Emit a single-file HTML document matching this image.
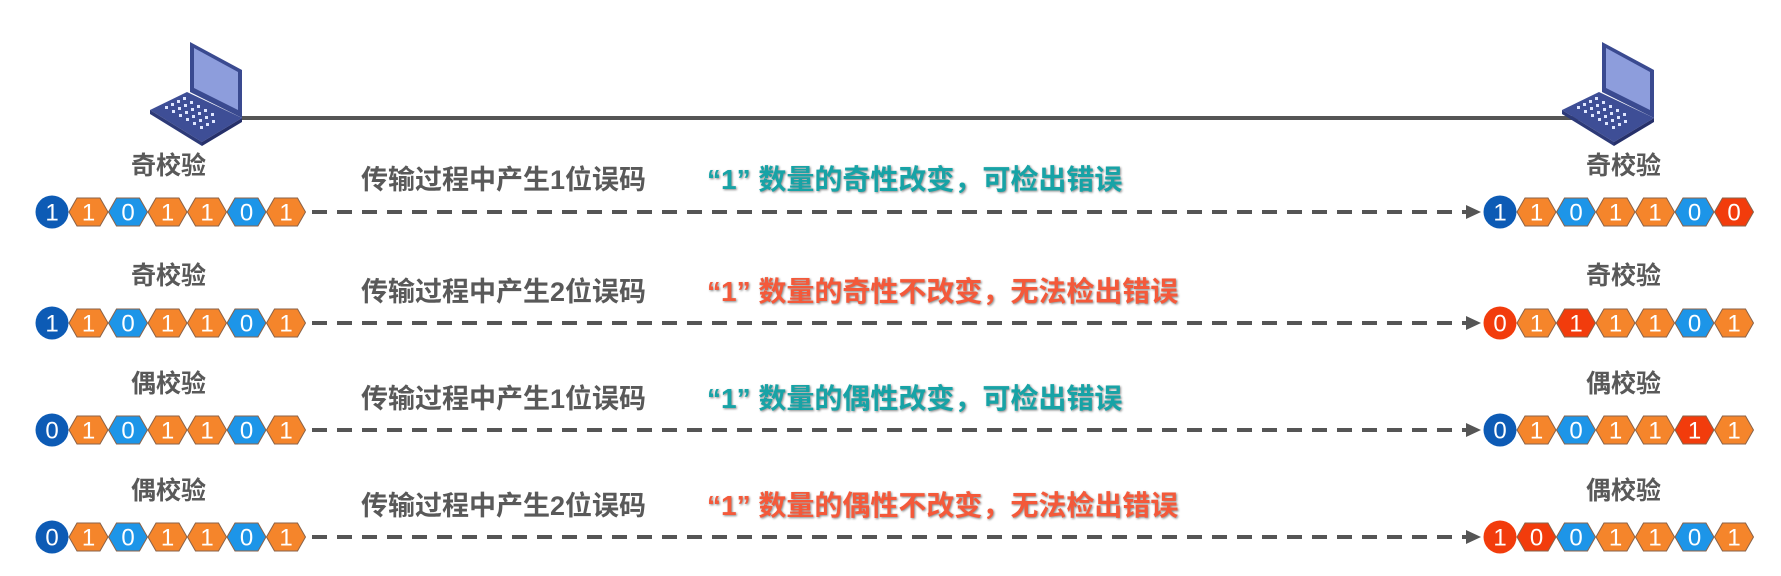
<!DOCTYPE html>
<html><head><meta charset="utf-8">
<style>
body{margin:0;width:1781px;height:576px;background:#fff;overflow:hidden;position:relative;font-family:"Liberation Sans","Noto Sans CJK SC",sans-serif;}
.t{position:absolute;font-weight:bold;white-space:nowrap;line-height:1;}
.lab{font-size:25px;color:#595959;}
.mid{font-size:27px;color:#595959;}
.g{font-size:28px;color:#17a3a6;text-shadow:1px 1px 2px #888;}
.r{font-size:28px;color:#f4593a;text-shadow:1px 1px 2px #888;}
svg{position:absolute;left:0;top:0}
</style></head><body>
<svg id="s" width="1781" height="576" xmlns="http://www.w3.org/2000/svg">
<defs>
<g id="lap">
<polygon points="150,110 187,92 242,118 202,142" fill="#3e4e96"/>
<polygon points="150,110 202,142 202,146 150,114" fill="#2d3a78"/>
<polygon points="202,142 242,118 242,122 202,146" fill="#26306a"/>
<polygon points="190,42 242,70 242,118 190,92" fill="#3a4a90"/>
<polygon points="194,48 238,72 238,110 194,88" fill="#8d9ddc"/>
<g fill="#dfe6ff">
<rect x="165" y="106" width="3" height="3"/><rect x="171" y="103" width="3" height="3"/><rect x="177" y="100" width="3" height="3"/><rect x="183" y="97" width="3" height="3"/>
<rect x="172" y="110" width="3" height="3"/><rect x="178" y="107" width="3" height="3"/><rect x="184" y="104" width="3" height="3"/><rect x="190" y="101" width="3" height="3"/>
<rect x="179" y="114" width="3" height="3"/><rect x="185" y="111" width="3" height="3"/><rect x="191" y="108" width="3" height="3"/><rect x="197" y="105" width="3" height="3"/>
<rect x="186" y="118" width="3" height="3"/><rect x="192" y="115" width="3" height="3"/><rect x="198" y="112" width="3" height="3"/><rect x="204" y="109" width="3" height="3"/>
<rect x="193" y="122" width="3" height="3"/><rect x="199" y="119" width="3" height="3"/><rect x="205" y="116" width="3" height="3"/><rect x="211" y="113" width="3" height="3"/>
<rect x="200" y="126" width="3" height="3"/><rect x="206" y="123" width="3" height="3"/><rect x="212" y="120" width="3" height="3"/>
</g>
</g>
</defs>
<line x1="242" y1="118" x2="1580" y2="118" stroke="#555" stroke-width="4"/>
<use href="#lap"/>
<use href="#lap" transform="translate(1412,0)"/>
</svg>
<div class="t lab" style="left:131px;top:154px">奇校验</div>
<div class="t lab" style="left:1586px;top:154px">奇校验</div>
<div class="t lab" style="left:131px;top:264px">奇校验</div>
<div class="t lab" style="left:1586px;top:264px">奇校验</div>
<div class="t lab" style="left:131px;top:372px">偶校验</div>
<div class="t lab" style="left:1586px;top:372px">偶校验</div>
<div class="t lab" style="left:131px;top:479px">偶校验</div>
<div class="t lab" style="left:1586px;top:479px">偶校验</div>

<div class="t mid" style="left:361px;top:167px">传输过程中产生1位误码</div>
<div class="t g" style="left:707px;top:166px">“1” 数量的奇性改变，可检出错误</div>
<div class="t mid" style="left:361px;top:279px">传输过程中产生2位误码</div>
<div class="t r" style="left:707px;top:278px">“1” 数量的奇性不改变，无法检出错误</div>
<div class="t mid" style="left:361px;top:386px">传输过程中产生1位误码</div>
<div class="t g" style="left:707px;top:385px">“1” 数量的偶性改变，可检出错误</div>
<div class="t mid" style="left:361px;top:493px">传输过程中产生2位误码</div>
<div class="t r" style="left:707px;top:492px">“1” 数量的偶性不改变，无法检出错误</div>

<script>
var s=document.getElementById('s'),NS='http://www.w3.org/2000/svg';
function el(t,a,txt){var e=document.createElementNS(NS,t);for(var k in a)e.setAttribute(k,a[k]);if(txt!=null)e.textContent=txt;s.appendChild(e);return e;}
var C={D:'#0d5bb5',O:'#f5852b',B:'#1d95e8',R:'#f23c0c'};
function chip(x,y,v,col,circle){
 if(circle){el('circle',{cx:x,cy:y,r:16.5,fill:col==='R'?C.R:C.D});}
 else{el('polygon',{points:[x,y,x+8,y-14,x+31,y-14,x+39,y,x+31,y+14,x+8,y+14].join(','),fill:C[col],stroke:'#8a6248','stroke-width':1});}
 el('text',{x:circle?x:x+19.5,y:y+8.5,'text-anchor':'middle','font-size':24,fill:'#fff','font-family':'Liberation Sans, sans-serif'},v);
}
function seq(x0,y,c,cc,bits,red){
 chip(x0,y,c,cc,true);
 for(var i=0;i<6;i++){var b=bits[i];chip(x0+17+i*39.5,y,b,red.indexOf(i)>=0?'R':(b==='1'?'O':'B'),false);}
}
var rows=[
 [212,'1','D','101101','1','D','101100',[5]],
 [323,'1','D','101101','0','R','111101',[1]],
 [430,'0','D','101101','0','D','101111',[4]],
 [537,'0','D','101101','1','R','001101',[0]]];
rows.forEach(function(r){
 var y=r[0];
 seq(52,y,r[1],r[2],r[3],[]);
 seq(1500,y,r[4],r[5],r[6],r[7]);
 el('line',{x1:312,y1:y,x2:1472,y2:y,stroke:'#555','stroke-width':4,'stroke-dasharray':'15,10'});
 el('polygon',{points:[1466,y-7,1481,y,1466,y+7].join(','),fill:'#555'});
});
</script>
</body></html>
